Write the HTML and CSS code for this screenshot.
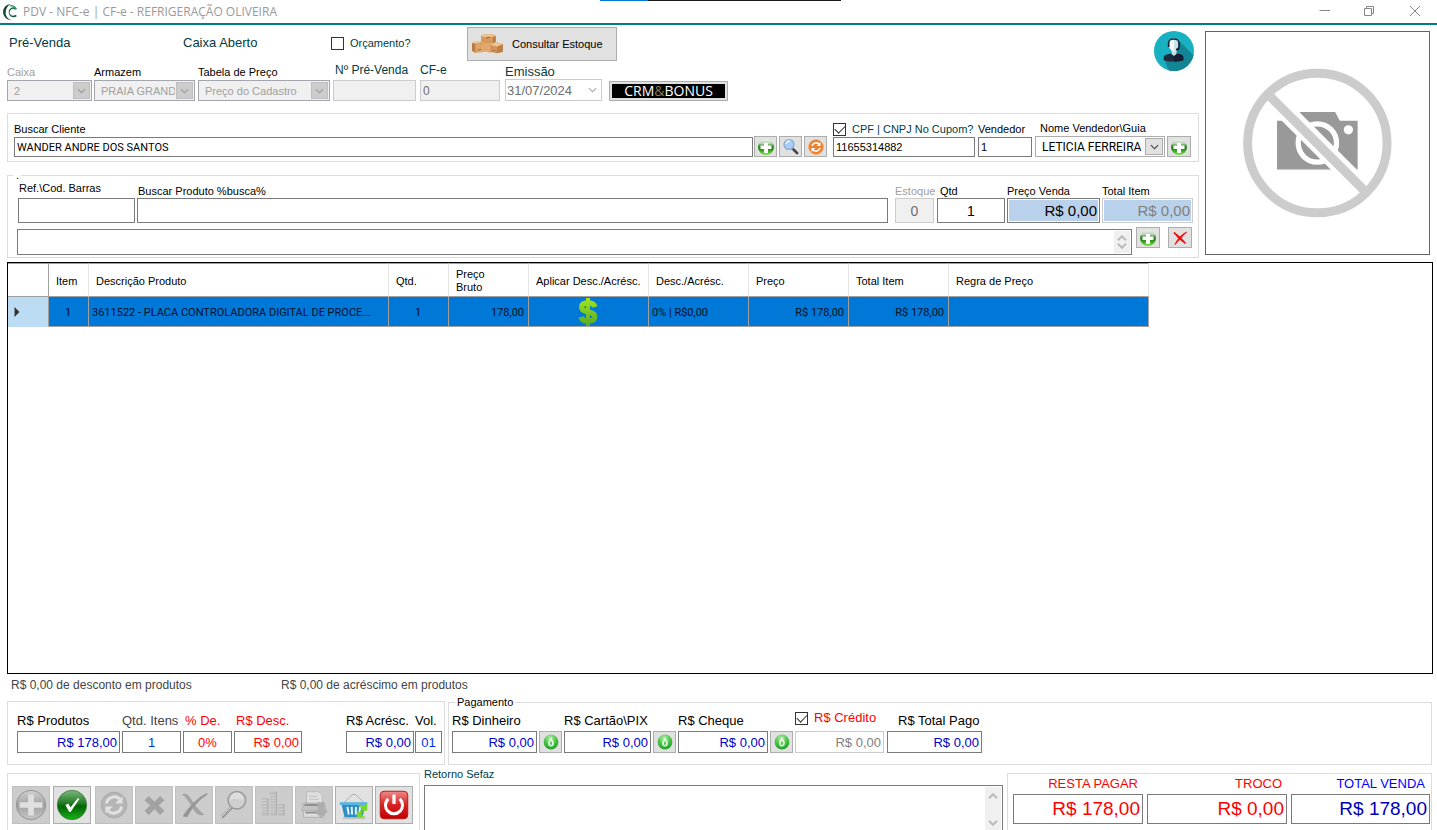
FILE: index.html
```html
<!DOCTYPE html>
<html lang="pt-BR">
<head>
<meta charset="utf-8">
<title>PDV - NFC-e | CF-e - REFRIGERAÇÃO OLIVEIRA</title>
<link rel="stylesheet" href="styles.css">
</head>
<body>
<svg class="defs" width="0" height="0" aria-hidden="true">
  <defs>
    <linearGradient id="gPlus" x1="0" y1="0" x2="0" y2="1"><stop offset="0" stop-color="#eef2ec"/><stop offset=".28" stop-color="#b9d2b5"/><stop offset=".42" stop-color="#3c9430"/><stop offset=".6" stop-color="#1f8212"/><stop offset="1" stop-color="#7be84a"/></linearGradient>
    <radialGradient id="gCoin" cx=".45" cy=".25" r=".8"><stop offset="0" stop-color="#b4f0ad"/><stop offset=".5" stop-color="#4cc44a"/><stop offset="1" stop-color="#1f9a26"/></radialGradient>
    <linearGradient id="gGray" x1="0" y1="0" x2="0" y2="1"><stop offset="0" stop-color="#d0d0d0"/><stop offset=".5" stop-color="#a2a2a2"/><stop offset="1" stop-color="#c4c4c4"/></linearGradient>
    <linearGradient id="gOk" x1="0" y1="0" x2="0" y2="1"><stop offset="0" stop-color="#7fb67f"/><stop offset=".45" stop-color="#1f7a1f"/><stop offset=".55" stop-color="#006400"/><stop offset="1" stop-color="#19b319"/></linearGradient>
    <linearGradient id="gOff" x1="0" y1="0" x2="0" y2="1"><stop offset="0" stop-color="#f08a8a"/><stop offset=".5" stop-color="#d92020"/><stop offset="1" stop-color="#c40000"/></linearGradient>
    <linearGradient id="gDollar" gradientUnits="userSpaceOnUse" x1="0" y1="0" x2="0" y2="84"><stop offset="0" stop-color="#a4e61a"/><stop offset="1" stop-color="#55a82c"/></linearGradient>
    <symbol id="plus" viewBox="0 0 18 18"><circle cx="9" cy="9" r="8" fill="url(#gPlus)"/><path d="M7 5h4v2.500h3.500v3.500H11v4H7v-4H3.500V7.500H7z" fill="#fff"/></symbol>
    <symbol id="coin" viewBox="0 0 16 16"><circle cx="8" cy="8" r="7.400" fill="url(#gCoin)"/><path d="M8.800 3.800L7 6.800" stroke="#e4fbe1" stroke-width="1.500"/><ellipse cx="8" cy="9" rx="2" ry="2.800" fill="none" stroke="#e4fbe1" stroke-width="1.600"/></symbol>
    <symbol id="down" viewBox="0 0 10 6"><path d="M1 .8l4 4 4-4" fill="none" stroke="currentColor" stroke-width="1.200"/></symbol>
    <symbol id="up" viewBox="0 0 10 6"><path d="M1 5.200l4-4 4 4" fill="none" stroke="currentColor" stroke-width="2"/></symbol>
    <symbol id="dn" viewBox="0 0 10 6"><path d="M1 .8l4 4 4-4" fill="none" stroke="currentColor" stroke-width="2"/></symbol>
  </defs>
</svg>

<header class="titlebar">
  <span class="strip"></span>
  <svg class="logo" viewBox="0 0 48 48"><path d="M26 0A24 24 0 1 0 28 48 21 21 0 0 1 11 25C11 14 17 5 26 0z" fill="#0d4a38"/><path d="M44 13A15 15 0 1 0 45 36l-5-4a10 10 0 1 1-1-15z" fill="#17603f"/><path d="M26 2a23 23 0 0 1 19 13l-4 2A19 19 0 0 0 22 7z" fill="#3a9a62"/></svg>
  <h1>PDV - NFC-e | CF-e - REFRIGERAÇÃO OLIVEIRA</h1>
  <div class="winctl">
    <button aria-label="Minimizar"><svg viewBox="0 0 12 12"><path d="M.5 4.500h10.500"/></svg></button>
    <button aria-label="Restaurar"><svg viewBox="0 0 12 12"><path d="M.5 2.500h7v7h-7zM2.500 2V.5h7v7H8"/></svg></button>
    <button aria-label="Fechar"><svg viewBox="0 0 12 12"><path d="M1 0l10 10M11 0L1 10"/></svg></button>
  </div>
</header>

<main>
<section class="upper">
  <div class="forms">
    <div class="head">
      <div class="head-main">
        <div class="status">
          <span class="st-a">Pré-Venda</span>
          <span class="st-b">Caixa Aberto</span>
          <label class="check st-c"><input type="checkbox"><span>Orçamento?</span></label>
          <button class="stock">
            <svg viewBox="0 0 96 60"><path d="M30 4l10-3h28l6 5v26H30z" fill="#d59a5c"/><path d="M30 4l10-3h28l6 5-6 2H34z" fill="#efc490"/><path d="M66 8l8-2v26h-8z" fill="#b97b42"/><path d="M3 27l10-6h19l8 6v26l-26 4-10-6z" fill="#dca468"/><path d="M3 27l10-6h19l-8 6z" fill="#f0c796"/><path d="M3 27l10 4v25L3 50z" fill="#b97b42"/><path d="M34 34l10-7h20l-4 30-24-6z" fill="#e0a86c"/><path d="M58 32l16-8 22 7v22l-20 5-18-5z" fill="#d0945a"/><path d="M58 32l16-8 22 7-18 7z" fill="#efc490"/><path d="M78 38l18-7v22l-18 5z" fill="#bd8148"/><path d="M45 12l12-2M20 48l10-2M64 49l8 2" stroke="#7d4f28" stroke-width="2"/></svg>
            Consultar Estoque</button>
        </div>
        <div class="row top-fields">
          <div class="field f-caixa"><label class="off" for="caixa">Caixa</label>
            <div class="combo dis"><select id="caixa" disabled><option>2</option></select><span class="arr"><svg><use href="#down"/></svg></span></div></div>
          <div class="field f-arm"><label class="blk" for="arm">Armazem</label>
            <div class="combo dis"><select id="arm" disabled><option>PRAIA GRAND</option></select><span class="arr"><svg><use href="#down"/></svg></span></div></div>
          <div class="field f-tab"><label class="blk" for="tab">Tabela de Preço</label>
            <div class="combo dis"><select id="tab" disabled><option>Preço do Cadastro</option></select><span class="arr"><svg><use href="#down"/></svg></span></div></div>
          <div class="field mid f-num"><label for="num">Nº Pré-Venda</label><input id="num" class="dis" type="text" disabled></div>
          <div class="field mid f-cfe"><label for="cfe">CF-e</label><input id="cfe" class="dis" type="text" value="0" disabled></div>
          <div class="field big f-emi"><label for="emi">Emissão</label>
            <div class="date"><input id="emi" type="text" value="31/07/2024" disabled><svg><use href="#down"/></svg></div></div>
          <button class="crm"><span>CRM<i>&amp;</i>BONUS</span></button>
        </div>
      </div>
      <svg class="avatar" viewBox="0 0 120 120"><defs><clipPath id="av"><circle cx="60" cy="60" r="60"/></clipPath></defs><g clip-path="url(#av)"><path d="M0 0h120v120H0z" fill="#17b1c2"/><path d="M76 30l60 60v50H52L32 88z" fill="#148594"/><path d="M29 88V79c0-6 8-9 20-11l11 5 10-5c12 2 18 5 18 11v9c-12 5-47 5-59 0z" fill="#1d2b41"/><path d="M60 72l10-4c12 2 18 5 18 11v9c-8 3-18 4-28 4z" fill="#152033"/><path d="M52 58h17l-2 11-7 6-7-6z" fill="#c9e2e6"/><path d="M44 38c0-11 7-15 15-15s16 4 16 15-4 22-15 23c-11-1-16-12-16-23z" fill="#f4fafb"/><path d="M60 23c9 0 15 4 15 15S71 60 60 61z" fill="#c6e3ea"/><path d="M44 36c0-10 7-12 15-12s16 3 16 12" fill="none" stroke="#1d2b41" stroke-width="4"/><path d="M44 34v14M75 34v14c0 5-4 8-9 8" fill="none" stroke="#10202f" stroke-width="5"/></g></svg>
    </div>

    <section class="group client row">
      <div class="field grow"><label class="blk" for="cli">Buscar Cliente</label><input id="cli" class="rob" type="text" value="WANDER ANDRE DOS SANTOS"></div>
      <div class="btns">
        <button class="mini" aria-label="Adicionar cliente"><svg><use href="#plus"/></svg></button>
        <button class="mini" aria-label="Pesquisar cliente"><svg viewBox="0 0 18 18"><path d="M10 10l5.500 5.500" stroke="#777" stroke-width="3"/><path d="M11 11l5 5" stroke="#333" stroke-width="1.500"/><circle cx="7" cy="6.500" r="5" fill="#a9cdfa" stroke="#8ea6c6" stroke-width="1.200"/><path d="M4 6a3.500 3.500 0 0 1 4-3" fill="none" stroke="#eef6ff" stroke-width="1.500"/></svg></button>
        <button class="mini" aria-label="Atualizar cliente"><svg viewBox="0 0 18 18"><circle cx="9" cy="9" r="7.500" fill="#ee7f2b" stroke="#f7b27c"/><path d="M5 8.200a4.200 4.200 0 0 1 7-2.200M13 9.800a4.200 4.200 0 0 1-7 2.200" fill="none" stroke="#fff" stroke-width="1.700"/><path d="M13.500 4v4h-4zM4.500 14v-4h4z" fill="#fff"/></svg></button>
      </div>
      <div class="field f-cpf"><label class="check"><input type="checkbox" checked><span>CPF | CNPJ No Cupom?</span></label><input aria-label="CPF ou CNPJ" type="text" value="11655314882"></div>
      <div class="field f-ven"><label class="blk" for="ven">Vendedor</label><input id="ven" type="text" value="1"></div>
      <div class="field f-nom"><label class="blk ind" for="nom">Nome Vendedor\Guia</label>
        <div class="combo"><select id="nom"><option>LETICIA FERREIRA</option></select><span class="arr"><svg><use href="#down"/></svg></span></div></div>
      <button class="mini" aria-label="Adicionar vendedor"><svg><use href="#plus"/></svg></button>
    </section>

    <fieldset class="product">
      <legend>.</legend>
      <div class="row">
        <div class="field f-ref"><label class="blk hi" for="ref">Ref.\Cod. Barras</label><input id="ref" type="text"></div>
        <div class="field grow"><label class="blk" for="prod">Buscar Produto %busca%</label><input id="prod" type="text"></div>
        <div class="field f-est"><label class="off" for="est">Estoque</label><input id="est" class="dis c" type="text" value="0" disabled></div>
        <div class="field f-qtd"><label class="blk" for="qtd">Qtd</label><input id="qtd" class="c" type="text" value="1"></div>
        <div class="field f-pv"><label class="blk" for="pv">Preço Venda</label><input id="pv" class="r sky" type="text" value="R$ 0,00"></div>
        <div class="field f-ti"><label class="blk" for="ti">Total Item</label><input id="ti" class="r sky pale" type="text" value="R$ 0,00" disabled></div>
      </div>
      <div class="obs">
        <div class="memo"><textarea aria-label="Observação do item"></textarea><span class="scroll"><svg><use href="#up"/></svg><svg><use href="#dn"/></svg></span></div>
        <button class="mini" aria-label="Incluir item"><svg><use href="#plus"/></svg></button>
        <button class="mini last" aria-label="Remover item"><svg viewBox="0 0 18 18"><path d="M3 3.500c4.500 3 8 6.500 11.500 11-4.500-3-8-6.500-11.500-11z" stroke="#f01010" stroke-width="1.500" fill="#f01010"/><path d="M15.500 3C10 6 6.500 10 4 15.500 8 11 10.500 8 15.500 3z" fill="#f01010" stroke="#f01010"/></svg></button>
      </div>
    </fieldset>
  </div>

  <div class="photo">
    <svg viewBox="255 93 675 672"><path d="M470 362h60l10-27h106l14 27h54v147H470z" fill="#999"/><circle cx="592" cy="429" r="58" fill="#999" stroke="#fff" stroke-width="16"/><circle cx="686" cy="389" r="14" fill="#fff"/><path d="M440 278l304 303" stroke="#fff" stroke-width="56"/><circle cx="592" cy="429" r="211" fill="none" stroke="#ccc" stroke-width="27"/><path d="M443 282l297 297" stroke="#ccc" stroke-width="28"/></svg>
  </div>
</section>

<section class="grid">
  <table>
    <colgroup><col class="w41"><col class="w40"><col class="w300"><col class="w60"><col class="w80"><col class="w120"><col class="w100"><col class="w100"><col class="w100"><col class="w200"></colgroup>
    <thead><tr><th></th><th>Item</th><th>Descrição Produto</th><th>Qtd.</th><th>Preço<br>Bruto</th><th>Aplicar Desc./Acrésc.</th><th>Desc./Acrésc.</th><th>Preço</th><th>Total Item</th><th>Regra de Preço</th></tr></thead>
    <tbody><tr><td class="sel"><svg viewBox="0 0 6 10"><path d="M.5 0l5 5-5 5z" fill="#333"/></svg></td><td class="c">1</td><td class="desc">3611522 - PLACA CONTROLADORA DIGITAL DE PROCE...</td><td class="c">1</td><td class="r">178,00</td><td class="c"><svg class="dollar" viewBox="0 0 60 84"><path d="M51 27C48 18 41 15 30 15c-12 0-19 4-19 12 0 20 39 10 39 29 0 9-8 13-20 13-13 0-19-4-21-12" fill="none" stroke="url(#gDollar)" stroke-width="16"/><path d="M24 0h12v84H24z" fill="url(#gDollar)"/></svg></td><td>0% | R$0,00</td><td class="r">R$ 178,00</td><td class="r">R$ 178,00</td><td></td></tr></tbody>
  </table>
</section>

<p class="notes"><span>R$ 0,00 de desconto em produtos</span><span>R$ 0,00 de acréscimo em produtos</span></p>

<section class="pay">
  <div class="group sums row">
    <div class="field v1"><label class="blk" for="s1">R$ Produtos</label><input id="s1" class="r blue" type="text" value="R$ 178,00"></div>
    <div class="field v2"><label class="gry" for="s2">Qtd. Itens</label><input id="s2" class="c blue2" type="text" value="1"></div>
    <div class="field v3"><label class="red" for="s3">% De.</label><input id="s3" class="c red" type="text" value="0%"></div>
    <div class="field v4"><label class="red" for="s4">R$ Desc.</label><input id="s4" class="r red" type="text" value="R$ 0,00"></div>
    <div class="field v5"><label class="blk" for="s5">R$ Acrésc.</label><input id="s5" class="r blue" type="text" value="R$ 0,00"></div>
    <div class="field v6"><label class="blk" for="s6">Vol.</label><input id="s6" class="c blue2" type="text" value="01"></div>
  </div>
  <fieldset class="payment">
    <legend>Pagamento</legend>
    <div class="row">
      <div class="field p1"><label class="blk" for="p1">R$ Dinheiro</label><input id="p1" class="r blue" type="text" value="R$ 0,00"></div>
      <button class="mini" aria-label="Preencher dinheiro"><svg><use href="#coin"/></svg></button>
      <div class="field p2"><label class="blk" for="p2">R$ Cartão\PIX</label><input id="p2" class="r blue" type="text" value="R$ 0,00"></div>
      <button class="mini" aria-label="Preencher cartão"><svg><use href="#coin"/></svg></button>
      <div class="field p3"><label class="blk" for="p3">R$ Cheque</label><input id="p3" class="r blue" type="text" value="R$ 0,00"></div>
      <button class="mini" aria-label="Preencher cheque"><svg><use href="#coin"/></svg></button>
      <div class="field p4"><label class="check red"><input type="checkbox" checked><span>R$ Crédito</span></label><input aria-label="Crédito" class="r gone" type="text" value="R$ 0,00" disabled></div>
      <div class="field p5"><label class="blk ind" for="p5">R$ Total Pago</label><input id="p5" class="r blue" type="text" value="R$ 0,00"></div>
    </div>
  </fieldset>
</section>

<section class="bottom">
  <div class="group tools">
    <button disabled aria-label="Novo"><svg viewBox="0 0 38 38"><circle cx="19" cy="19" r="15.500" fill="url(#gGray)" stroke="#929292"/><path d="M16 8h6v8h9v6h-9v8h-6v-8H7v-6h9z" fill="#e0e0e0"/></svg></button>
    <button aria-label="Confirmar"><svg viewBox="0 0 38 38"><circle cx="19" cy="19" r="15.500" fill="url(#gOk)" stroke="#3c7a3c" stroke-width=".8"/><path d="M12 19l3-1.500 2.500 4L25 12l2 .5-9.500 14-1.500-.5z" fill="#fff"/></svg></button>
    <button disabled aria-label="Atualizar"><svg viewBox="0 0 38 38"><circle cx="19" cy="19" r="13.500" fill="#b5b5b5" stroke="#a8a8a8"/><path d="M11 17.500a8.500 8.500 0 0 1 14-5M27 20.500a8.500 8.500 0 0 1-14 5" fill="none" stroke="#e2e2e2" stroke-width="3.200"/><path d="M28 10v7.500h-8zM10 28v-7.500h8z" fill="#e2e2e2"/></svg></button>
    <button disabled aria-label="Cancelar"><svg viewBox="0 0 38 38"><path d="M9 14l4.500-4.500 6 6 6-6L30 14l-6 5.500 6 5.500-4.500 4.500-6-6-6 6L9 25l6-5.500z" fill="#a2a2a2"/></svg></button>
    <button disabled aria-label="Excluir"><svg viewBox="0 0 38 38"><path d="M6 8c5-2 7 0 10 5l5 7c4 5 6 7 9 9-5 2-9 0-12-6l-5-8C10 11 9 9 6 8z" fill="#a4a4a4"/><path d="M33 6C24 10 14 20 7 31l5 1c5-10 12-18 21-24z" fill="#969696"/></svg></button>
    <button disabled aria-label="Pesquisar"><svg viewBox="0 0 38 38"><path d="M17 21L6 32" stroke="#999" stroke-width="3.500"/><path d="M16 21L5 32" stroke="#e2e2e2" stroke-width="1"/><circle cx="22" cy="14" r="9.300" fill="#cfcfcf" stroke="#999" stroke-width="1.500"/><path d="M15 14c4-2 9-2 14 0 0-5-3-8-7-8s-7 3-7 8z" fill="#dedede"/></svg></button>
    <button disabled aria-label="Valores"><svg viewBox="0 0 38 38"><path d="M6 12h7v18H6zM15 5h7v25h-7zM23 18h7v12h-7z" fill="#bdbdbd"/><path d="M6 14.500h7M6 17.500h7M6 20.500h7M6 23.500h7M6 26.500h7M15 8.500h7M15 11.500h7M15 14.500h7M15 17.500h7M15 20.500h7M15 23.500h7M15 26.500h7M23 20.500h7M23 23.500h7M23 26.500h7" stroke="#d2d2d2"/><path d="M12.500 12v18M21.500 5v25M29.500 18v12" stroke="#a9a9a9"/></svg></button>
    <button disabled aria-label="Imprimir"><svg viewBox="0 0 38 38"><path d="M11 5h13l4 4v10H11z" fill="#dedede" stroke="#b8b8b8"/><path d="M14 10h8M14 13h10" stroke="#c0c0c0"/><path d="M8 17h22l2 8H6z" fill="#c2c2c2" stroke="#b0b0b0"/><path d="M9 19h17" stroke="#8d8d8d" stroke-width="2"/><path d="M8 25h22v7H8z" fill="#dcdcdc" stroke="#b0b0b0"/><path d="M10 27h13" stroke="#8f8f8f" stroke-width="2"/><path d="M23 16h7v9h4l-7.500 8L19 25h4z" fill="#adadad"/></svg></button>
    <button aria-label="Vendas"><svg viewBox="0 0 38 38"><path d="M7 33h24" stroke="#c2c2c2" stroke-width="2"/><path d="M8 17l9-9h4l9 9" fill="none" stroke="#a9a9a9"/><path d="M4 16h29v3H4z" fill="#5bb5dd"/><path d="M6 19h25l-3 13H9z" fill="#2f8fc4"/><path d="M12 21l1.500 8M16.500 21l.5 8M21 21v8M25.500 21l-1 8" stroke="#eaf7ff" stroke-width="2"/><path d="M23 19h8l2-2v8h-8l2.500-2.500zM31 32h-8l-1 1v-7h7l-2.500 2.500z" fill="#7bd62c"/></svg></button>
    <button aria-label="Sair"><svg viewBox="0 0 38 38"><rect x="4.500" y="4.500" width="29" height="29" rx="4" fill="url(#gOff)" stroke="#b31515"/><path d="M13 12.500a9 9 0 1 0 12 0" fill="none" stroke="#fff" stroke-width="3.200"/><path d="M19 8v10" stroke="#fff" stroke-width="3.400"/></svg></button>
  </div>
  <div class="retorno"><label for="sefaz">Retorno Sefaz</label>
    <div class="memo"><textarea id="sefaz"></textarea><span class="scroll"><svg><use href="#up"/></svg><svg><use href="#dn"/></svg></span></div></div>
  <div class="group totals">
    <div class="field t1"><label class="red" for="t1">RESTA PAGAR</label><input id="t1" class="r red" type="text" value="R$ 178,00"></div>
    <div class="field t2"><label class="red" for="t2">TROCO</label><input id="t2" class="r red" type="text" value="R$ 0,00"></div>
    <div class="field t3"><label class="pure" for="t3">TOTAL VENDA</label><input id="t3" class="r navy" type="text" value="R$ 178,00"></div>
  </div>
</section>
</main>
</body>
</html>
```
FILE: styles.css
```css
* { box-sizing: border-box; }
html, body { height: 100%; }
body { margin: 0; display: flex; flex-direction: column; overflow: hidden; background: #fff; color: #003c46; font: 11px/16px "Liberation Sans", Arial, sans-serif; }
input, select, textarea, button { font: inherit; color: #000; margin: 0; border-radius: 0; outline: none; }
input[type=text] { width: 100%; min-width: 0; height: 20px; padding: 0 2px; border: 1px solid #7a7a7a; background: #fff; }
button { padding: 0; border: 1px solid #adadad; background: #e1e1e1; display: flex; align-items: center; justify-content: center; flex: none; }
svg { display: block; flex: none; }
.defs { position: absolute; }
fieldset { margin: 0; min-width: 0; border: 1px solid #dcdcdc; }
.group { border: 1px solid #dcdcdc; }
.row { display: flex; align-items: flex-end; }
.field { display: flex; flex-direction: column; flex: none; }
.field > label { white-space: nowrap; }
.grow { flex: 1; min-width: 0; }
.blk { color: #000; }
.off { color: #a0a0a0; }
.gry { color: #444; }
input.c, td.c { text-align: center; }
input.r, td.r { text-align: right; }
.red, input.red { color: #f00; }
input.blue { color: #0000c8; }
input.blue2 { color: #0032e0; }
input.navy { color: #0000b4; }
.pure { color: #00f; }
.ind { padding-left: 5px; }

.check { display: flex; align-items: center; gap: 6px; }
.check input { appearance: none; width: 13px; height: 13px; border: 1px solid #333; background: #fff; display: grid; place-items: center; }
.check input:checked::after { content: ""; width: 9px; height: 5px; border: solid #333; border-width: 0 0 1px 1px; transform: rotate(-45deg); margin-bottom: 3px; }

.titlebar { position: relative; display: flex; align-items: center; height: 25px; border-bottom: 2px solid #008080; flex: none; }
.strip { position: absolute; top: 0; left: 600px; width: 241px; height: 1px; background: linear-gradient(90deg, #0078d7 48px, #1a1a1a 48px); }
.logo { width: 16px; height: 16px; margin: 0 5px 0 2px; }
.titlebar h1 { flex: 1; margin: 0; font: 400 12px/20px "Open Sans", sans-serif; color: #999; }
.winctl { display: flex; }
.winctl button { width: 45px; height: 20px; border: 0; background: none; }
.winctl svg { width: 12px; height: 12px; fill: none; stroke: #888; }

main { flex: 1; min-height: 0; display: flex; flex-direction: column; padding: 0 4px 0 7px; }
.upper { display: flex; gap: 6px; padding-right: 3px; flex: none; }
.forms { flex: 1; min-width: 0; padding-top: 2px; }
.head { display: flex; justify-content: space-between; padding-right: 5px; margin-bottom: 12px; }
.avatar { width: 40px; height: 40px; margin-top: 4px; }
.status { display: flex; height: 34px; align-items: center; padding-left: 2px; font-size: 13px; }
.st-a, .st-b, .st-c { margin-top: -2px; }
.st-a { width: 174px; }
.st-b { width: 148px; }
.st-c { width: 136px; font-size: 11px; }
.stock { width: 150px; height: 34px; gap: 9px; justify-content: flex-start; padding-left: 3px; }
.stock svg { width: 32px; height: 20px; }
.status .stock { font-size: 11px; }
.top-fields { height: 40px; }
.top-fields input { height: 21px; }
.f-caixa { width: 85px; margin-right: 2px; }
.f-arm { width: 101px; margin-right: 3px; }
.f-tab { width: 132px; margin-right: 3px; }
.f-num { width: 83px; margin-right: 4px; }
.f-cfe { width: 80px; margin-right: 5px; }
.f-emi { width: 97px; margin-right: 7px; }
.mid, .mid input { font-size: 12px; }
.mid > label { margin: 0 0 2px 2px; }
.f-cfe > label { margin-left: 0; }
.big { font-size: 13px; }
.big > label { line-height: 14px; }
.combo { display: flex; height: 21px; border: 1px solid #adadad; background: #fff; }
.combo select { appearance: none; flex: 1; min-width: 0; border: 0; background: none; padding: 0 0 0 6px; font-family: Roboto, sans-serif; font-size: 12px; opacity: 1; }
.combo.dis, input.dis { background: #f0f0f0; }
.combo.dis { border-color: #a5a5ad; color: #a0a0a0; }
.combo.dis select { color: #a0a0a0; font-family: "Liberation Sans", Arial, sans-serif; font-size: 11px; }
.arr { width: 18px; margin: 1px; border: 1px solid #adadad; background: #e1e1e1; display: grid; place-items: center; color: #444; }
.dis .arr { width: 17px; background: #ccc; border-color: #bfbfbf; color: #999; }
.arr svg, .date svg { width: 9px; height: 6px; }
input.dis { border-color: #ccc; color: #6d6d6d; }
.date { display: flex; align-items: center; height: 22px; border: 1px solid #ccc; padding-right: 4px; color: #aaa; }
.date input { flex: 1; border: 0; color: #6d6d6d; height: 18px; padding: 0 1px; }
.crm { width: 119px; height: 20px; padding: 2px; }
.crm span { flex: 1; background: #000; color: #fff; font: 14px/14px "Open Sans", sans-serif; text-align: center; }
.crm i { font-style: normal; color: #8a7a5a; }

.client { height: 49px; padding: 0 7px 4px 6px; }
.btns { display: flex; gap: 2px; margin: 0 6px 0 1px; }
.mini { width: 24px; height: 21px; }
.btns .mini { width: 23px; }
.mini svg { width: 18px; height: 18px; }
.client .rob { font-family: Roboto, sans-serif; }
.f-cpf { width: 142px; margin-right: 3px; }
.f-ven { width: 54px; margin-right: 3px; }
.f-nom { width: 130px; margin-right: 2px; }

.product { margin-top: 9px; padding: 0 5px 2px 9px; height: 87px; }
.product legend { height: 8px; padding: 0 2px 0 3px; margin-left: -4px; font-size: 11px; line-height: 8px; color: #000; }
.product .row { height: 44px; padding-left: 1px; }
.product .row label { line-height: 14px; padding-left: 1px; }
.product .row label.hi { margin-bottom: 3px; }
.product .row .f-est label, .product .row .f-pv label, .product .row .f-ti label { padding-left: 0; }
.product .row input { height: 25px; font-size: 14px; }
.f-ref { width: 117px; margin-right: 2px; }
.f-est { width: 39px; margin: 0 3px 0 7px; }
.f-qtd { width: 68px; margin-right: 2px; }
.product .row .f-qtd label { padding-left: 3px; }
.f-pv { width: 93px; margin-right: 2px; }
.f-ti { width: 91px; }
.product .row .sky { font-size: 15px; background: #b9d1ea; border-color: #7a7a7a; box-shadow: inset 0 0 0 1px #fff; padding: 0 2px; }
.product .row .pale { color: #808080; border-color: #ccc; }
.obs { display: flex; gap: 4px; margin-top: 4px; padding-right: 1px; }
.obs .memo { flex: 1; height: 26px; margin-top: 2px; }
.obs .last { margin-left: 4px; }
.memo { display: flex; border: 1px solid #7a7a7a; background: #fff; }
.memo textarea { flex: 1; min-width: 0; border: 0; padding: 2px; resize: none; background: none; overflow: hidden; }
.scroll { width: 16px; margin: 1px; padding: 4px 0; background: #f0f0f0; color: #bbb; display: flex; flex-direction: column; align-items: center; justify-content: space-between; }
.scroll svg { width: 10px; height: 6px; }
.photo { width: 225px; height: 224px; margin-top: 6px; border: 1px solid #646464; flex: none; }
.photo svg { width: 100%; height: 100%; }

.grid { flex: 1; min-height: 80px; margin-top: 4px; border: 1px solid #000; overflow: hidden; }
table { table-layout: fixed; width: 1141px; border-collapse: separate; border-spacing: 0; color: #000; line-height: 13px; }
.w40 { width: 40px; } .w41 { width: 41px; } .w60 { width: 60px; } .w80 { width: 80px; } .w100 { width: 100px; } .w120 { width: 120px; } .w200 { width: 200px; } .w300 { width: 300px; }
th { height: 34px; padding: 2px 0 0 7px; text-align: left; font-weight: 400; white-space: nowrap; border: solid #e5e5e5; border-width: 1px 1px 1px 0; border-top-color: #a0a0a0; border-bottom-color: #a0a0a0; }
th:first-child { border-right-color: #a0a0a0; }
td { height: 30px; padding: 1px 4px 0 3px; white-space: nowrap; background: #0078d7; border: solid #a0a0a0; border-width: 0 1px 1px 0; font-family: Roboto, sans-serif; color: #00102a; }
td.sel { background: #bcdcf4; padding-left: 6px; border-bottom-color: #bcdcf4; }
td.sel svg { width: 6px; height: 10px; }
.dollar { width: 20px; height: 28px; margin: 0 auto; }

.notes { display: flex; margin: 0; height: 21px; padding-left: 4px; font-size: 12px; line-height: 22px; color: #444; flex: none; }
.notes span { width: 270px; }

.pay { display: flex; gap: 3px; height: 70px; padding-right: 1px; flex: none; }
.pay, .pay input { font-size: 13px; }
.pay .row input[type=text] { height: 22px; }
.pay .field > label { line-height: 18px; margin-bottom: 1px; }
.sums { width: 438px; margin-top: 6px; padding: 0 2px 11px 9px; flex: none; }
.sums .field { margin-right: 2px; }
.v1 { width: 103px; } .v2 { width: 59px; } .v3 { width: 49px; } .v4 { width: 68px; } .v5 { width: 68px; } .v6 { width: 27px; }
.v3 label, .v4 label { padding-left: 2px; }
.sums .v4 { margin-right: 44px; }
.sums .v5 { margin-right: 1px; }
.sums .v6 { margin-right: 0; }
.payment { flex: 1; padding: 0 3px; }
.payment legend { font-size: 11px; line-height: 14px; color: #000; padding: 0 2px; margin-left: 3px; }
.payment .row { height: 44px; }
.payment .mini { width: 23px; height: 22px; margin: 0 2px; }
.payment .mini svg { width: 16px; height: 16px; }
.p1 { width: 85px; } .p2 { width: 87px; } .p3 { width: 90px; } .p4 { width: 89px; margin-right: 3px; } .p5 { width: 95px; }
.pay .p4 > label { margin-bottom: 4px; }
.p5 .ind { padding-left: 11px; }
input.gone { border-color: #ccc; color: #808080; }

.bottom { display: flex; height: 65px; padding-right: 1px; flex: none; }
.bottom .group { margin-top: 8px; border-bottom: 0; }
.tools { display: flex; gap: 2px; width: 413px; padding: 12px 4px 0; flex: none; }
.tools button { width: 38px; height: 38px; }
.tools button:nth-child(1) { margin-right: 1px; }
.tools button:nth-child(2) { margin-right: 2px; }
.tools button:disabled { background: #ccc; border-color: #bfbfbf; }
.tools svg { width: 36px; height: 36px; }
.retorno { flex: 1; min-width: 0; display: flex; flex-direction: column; margin: 1px 4px 0; }
.retorno .memo { flex: 1; margin-top: 3px; border-bottom: 0; }
.retorno .scroll { padding-top: 6px; margin-bottom: 0; }
.totals { display: flex; gap: 4px; padding: 2px 1px 0 5px; flex: none; }
.totals .field { font-size: 13px; }
.totals label { text-align: right; padding-right: 5px; margin-bottom: 2px; }
.totals input[type=text] { height: 30px; font-size: 19px; }
.t1 { width: 130px; } .t2 { width: 140px; } .t3 { width: 139px; }
```
